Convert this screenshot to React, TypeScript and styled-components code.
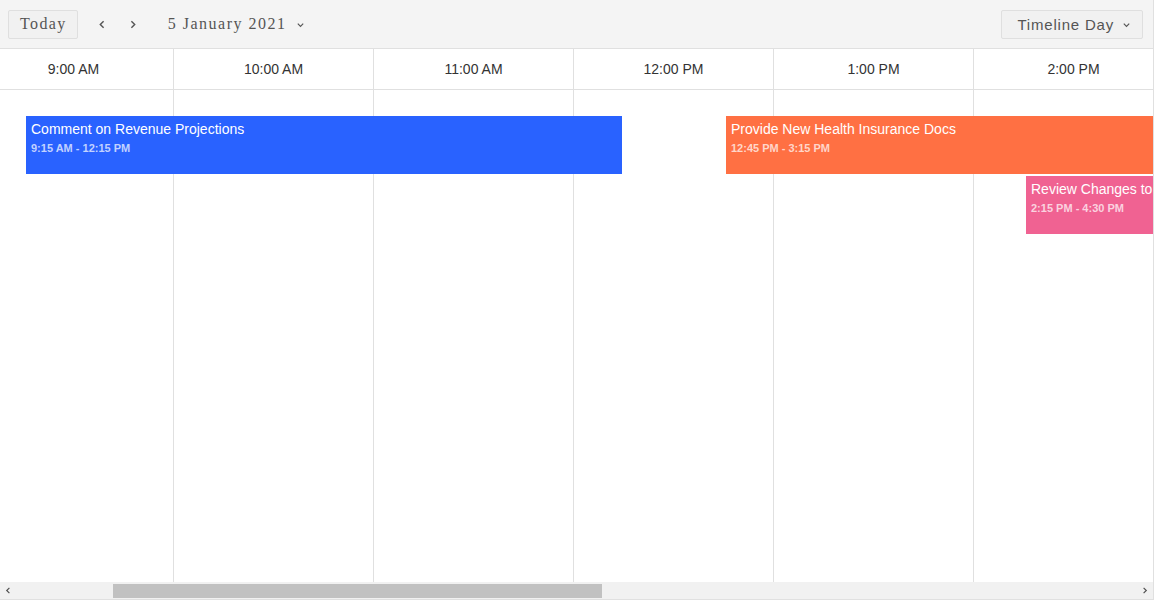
import React, {useLayoutEffect, useRef, useState} from 'react'
import styled, {createGlobalStyle} from 'styled-components'

const HOUR_WIDTH = 200
const START_HOUR = 8
const END_HOUR = 21
const SCROLL_LEFT = 226
const VIEW_WIDTH = 1153
const TRACK_WIDTH = 1120

const events = [
	{title: 'Comment on Revenue Projections', time: '9:15 AM - 12:15 PM', start: 9.25, end: 12.25, row: 0, color: '#2962ff'},
	{title: 'Provide New Health Insurance Docs', time: '12:45 PM - 3:15 PM', start: 12.75, end: 15.25, row: 0, color: '#ff7043'},
	{title: 'Review Changes to Health Insurance Coverage', time: '2:15 PM - 4:30 PM', start: 14.25, end: 16.5, row: 1, color: '#f06292'}
]

const hourLabel = (h: number) => {
	const suffix = h < 12 ? 'AM' : 'PM'
	const hh = h % 12 === 0 ? 12 : h % 12
	return `${hh}:00 ${suffix}`
}

const hours = Array.from({length: END_HOUR - START_HOUR}, (_, i) => START_HOUR + i)
const contentWidth = hours.length * HOUR_WIDTH
// the scroll area keeps a small gutter after the last slot
const scrollWidth = contentWidth + 40

const Chevron = ({dir}: {dir: 'left' | 'right' | 'down'}) => {
	const d = dir === 'left' ? 'M6 2 L3 5 L6 8' : dir === 'right' ? 'M4 2 L7 5 L4 8' : 'M2 4 L5 7 L8 4'
	return (
		<svg width="10" height="10" viewBox="0 0 10 10">
			<path d={d} fill="none" stroke="currentColor" strokeWidth="1.3" />
		</svg>
	)
}

const App = () => {
	const scrollRef = useRef<HTMLDivElement>(null)
	const [scroll, setScroll] = useState(SCROLL_LEFT)

	useLayoutEffect(() => {
		if (scrollRef.current) {
			scrollRef.current.scrollLeft = SCROLL_LEFT
			setScroll(scrollRef.current.scrollLeft)
		}
	}, [])

	const thumbWidth = (TRACK_WIDTH * VIEW_WIDTH) / scrollWidth
	const thumbLeft = (TRACK_WIDTH * scroll) / scrollWidth

	return (
		<>
			<GlobalStyle />
			<Scheduler>
				<Toolbar>
					<ToolButton>Today</ToolButton>
					<NavButton>
						<Chevron dir="left" />
					</NavButton>
					<NavButton>
						<Chevron dir="right" />
					</NavButton>
					<DateLabel>
						5 January 2021
						<Chevron dir="down" />
					</DateLabel>
					<Spacer />
					<ViewButton>
						Timeline Day
						<Chevron dir="down" />
					</ViewButton>
				</Toolbar>
				<Viewport ref={scrollRef}>
					<Canvas style={{width: scrollWidth}}>
						<HeaderRow>
							{hours.map((h) => (
								<HeaderCell key={h}>{hourLabel(h)}</HeaderCell>
							))}
						</HeaderRow>
						<Body>
							{hours.map((h) => (
								<Slot key={h} />
							))}
							{events.map((e) => (
								<Event
									key={e.title}
									$color={e.color}
									style={{
										left: (e.start - START_HOUR) * HOUR_WIDTH + 2,
										width: (e.end - e.start) * HOUR_WIDTH - 4,
										top: 26 + e.row * 60
									}}>
									<EventTitle>{e.title}</EventTitle>
									<EventTime>{e.time}</EventTime>
								</Event>
							))}
						</Body>
					</Canvas>
				</Viewport>
				<ScrollBar>
					<ScrollArrow>
						<Chevron dir="left" />
					</ScrollArrow>
					<Track>
						<Thumb style={{left: thumbLeft, width: thumbWidth}} />
					</Track>
					<ScrollArrow>
						<Chevron dir="right" />
					</ScrollArrow>
				</ScrollBar>
			</Scheduler>
		</>
	)
}

const GlobalStyle = createGlobalStyle`
	html, body {
		margin: 0;
		padding: 0;
		background: #fff;
	}
	body {
		font-family: "Liberation Sans", Arial, sans-serif;
	}
`

const Scheduler = styled.div`
	width: ${VIEW_WIDTH}px;
	height: 599px;
	display: flex;
	flex-direction: column;
	border-right: 1px solid #e0e0e0;
	border-bottom: 1px solid #e0e0e0;
	box-sizing: content-box;
	overflow: hidden;
`

const Toolbar = styled.div`
	height: 48px;
	flex: none;
	display: flex;
	align-items: center;
	padding: 0 10px 0 8px;
	background: #f4f4f4;
	border-bottom: 1px solid #e0e0e0;
`

const ToolButton = styled.button`
	height: 29px;
	padding: 0 10px 0 11px;
	background: #f1f1f1;
	border: 1px solid #dfdfdf;
	border-radius: 2px;
	font-family: "Liberation Serif", "Times New Roman", serif;
	font-size: 16px;
	letter-spacing: 1.4px;
	color: #555;
	margin-right: 10px;
`

const NavButton = styled.span`
	width: 30px;
	height: 28px;
	display: flex;
	align-items: center;
	justify-content: center;
	color: #555;
	svg {
		width: 11px;
		height: 11px;
	}
`

const DateLabel = styled.span`
	display: flex;
	align-items: center;
	gap: 9px;
	margin-left: 20px;
	font-family: "Liberation Serif", "Times New Roman", serif;
	font-size: 16px;
	letter-spacing: 1.5px;
	color: #555;
	svg {
		width: 9px;
		height: 9px;
	}
`

const Spacer = styled.div`
	flex: 1;
`

const ViewButton = styled.button`
	height: 29px;
	display: flex;
	align-items: center;
	gap: 8px;
	padding: 0 11px 0 15px;
	background: #f1f1f1;
	border: 1px solid #dfdfdf;
	border-radius: 2px;
	font-family: "Liberation Sans", Arial, sans-serif;
	font-size: 15px;
	letter-spacing: 0.8px;
	color: #555;
	svg {
		width: 9px;
		height: 9px;
	}
`

const Viewport = styled.div`
	flex: 1;
	overflow: hidden;
`

const Canvas = styled.div`
	height: 100%;
	display: flex;
	flex-direction: column;
`

const HeaderRow = styled.div`
	height: 40px;
	flex: none;
	display: flex;
	border-bottom: 1px solid #e0e0e0;
`

const HeaderCell = styled.div`
	width: ${HOUR_WIDTH}px;
	flex: none;
	box-sizing: border-box;
	border-right: 1px solid #e0e0e0;
	display: flex;
	align-items: center;
	justify-content: center;
	font-size: 14px;
	color: #333;
`

const Body = styled.div`
	flex: 1;
	position: relative;
	display: flex;
`

const Slot = styled.div`
	width: ${HOUR_WIDTH}px;
	flex: none;
	box-sizing: border-box;
	border-right: 1px solid #e0e0e0;
`

const Event = styled.div<{$color: string}>`
	position: absolute;
	height: 58px;
	box-sizing: border-box;
	padding: 5px 5px;
	background: ${(p) => p.$color};
	color: #fff;
	overflow: hidden;
	white-space: nowrap;
`

const EventTitle = styled.div`
	font-size: 14px;
	line-height: 17px;
`

const EventTime = styled.div`
	margin-top: 4px;
	font-size: 11px;
	font-weight: bold;
	color: rgba(255, 255, 255, 0.72);
`

const ScrollBar = styled.div`
	height: 17px;
	flex: none;
	display: flex;
	background: #f1f1f1;
`

const ScrollArrow = styled.div`
	width: 17px;
	display: flex;
	align-items: center;
	justify-content: center;
	color: #505050;
	svg {
		width: 9px;
		height: 9px;
	}
`

const Track = styled.div`
	flex: 1;
	position: relative;
`

const Thumb = styled.div`
	position: absolute;
	top: 2px;
	bottom: 1px;
	background: #c1c1c1;
`

export default App
